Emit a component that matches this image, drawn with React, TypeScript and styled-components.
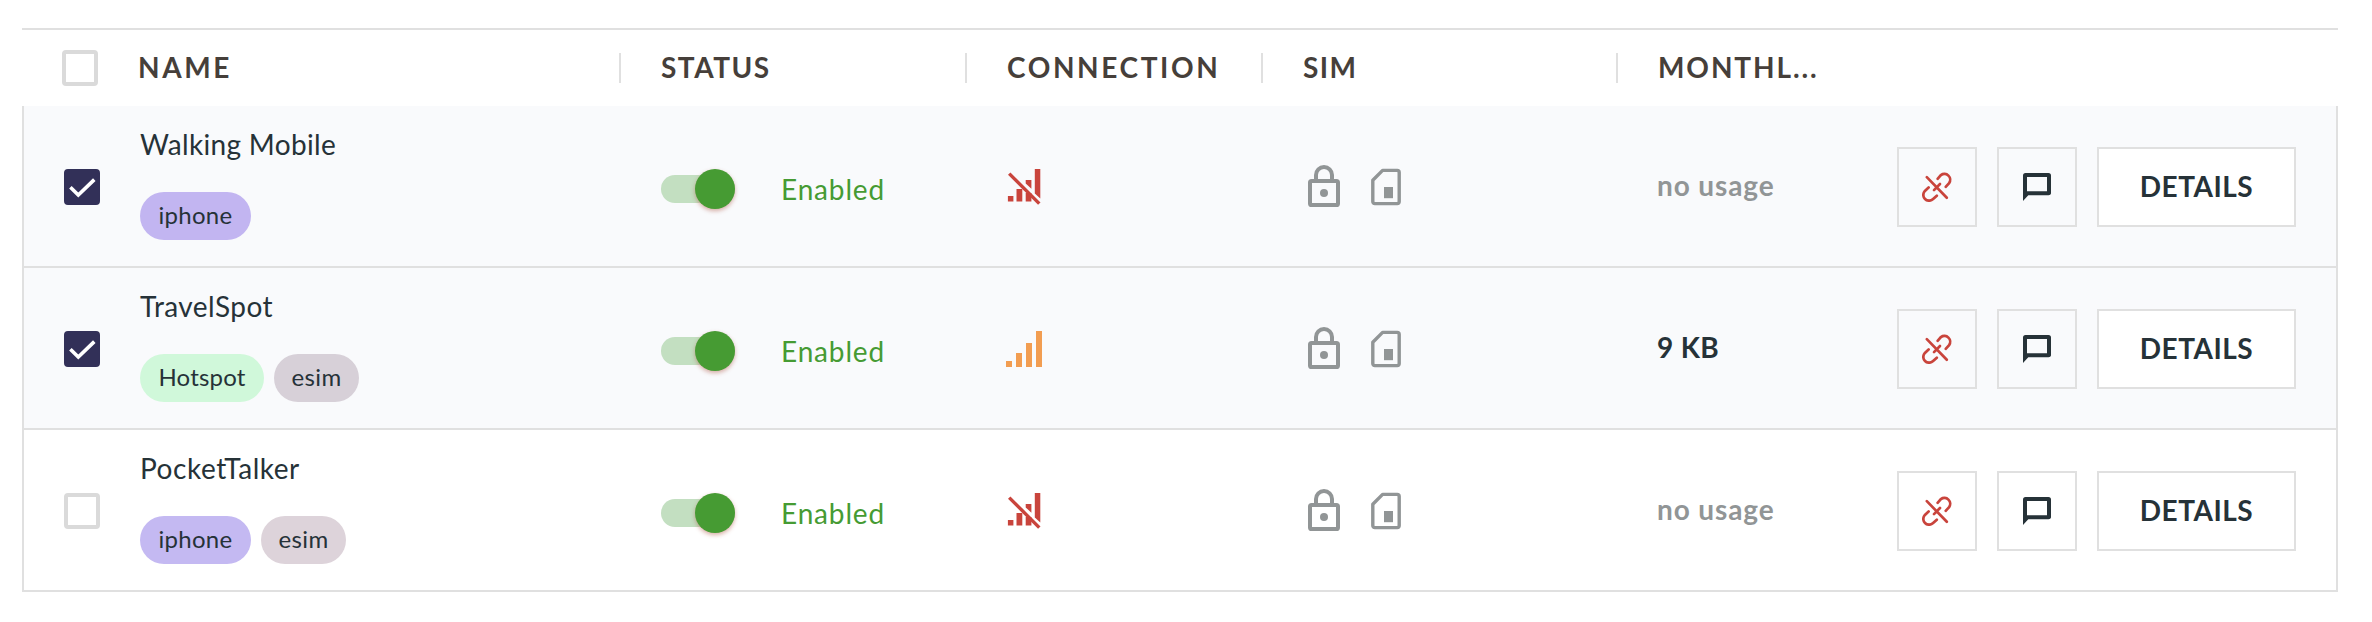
import React from 'react';
import styled, { createGlobalStyle } from 'styled-components';

const GlobalStyle = createGlobalStyle`
  * { box-sizing: border-box; }
  body { margin: 0; background: #fff; }
  button { font: inherit; margin: 0; padding: 0; }
`;

const line = '#e0e0e0';
const ink = '#263238';
const danger = '#c9443c';
const success = '#469b33';

const Page = styled.main`
  padding: 28px 34px 30px 22px;
  font-family: Lato, 'Liberation Sans', sans-serif;
  font-size: 28px;
  line-height: 34px;
  color: ${ink};
`;

const HeaderRow = styled.header`
  display: grid;
  grid-template-columns: 116px 481px 346px 296px 355px 1fr;
  align-items: center;
  height: 78px;
  border-top: 2px solid ${line};
`;

const HeaderCheck = styled.div`
  padding-left: 40px;
`;

const HeaderCell = styled.div<{ $tracking: number; $divider?: boolean }>`
  height: 30px;
  display: flex;
  align-items: center;
  padding-bottom: 3px;
  padding-left: ${({ $divider }) => ($divider ? 40 : 0)}px;
  border-left: ${({ $divider }) => ($divider ? `2px solid ${line}` : 'none')};
  font-weight: 700;
  letter-spacing: ${({ $tracking }) => $tracking}px;
  color: #463f3a;
  white-space: nowrap;
`;

const Body = styled.section`
  border: 2px solid ${line};
  border-top: 0;
`;

const Row = styled.div<{ $selected: boolean }>`
  display: grid;
  grid-template-columns: 116px 521px 346px 301px 349px 200px 1fr;
  box-sizing: content-box;
  height: 160px;
  background: ${({ $selected }) => ($selected ? '#f9fafc' : '#fff')};
  border-bottom: 2px solid ${line};
  &:last-child { border-bottom: 0; }
`;

const CheckCell = styled.div`
  padding: 63px 0 0 40px;
`;

const Box = styled.div<{ $checked?: boolean }>`
  width: 36px;
  height: 36px;
  border: 4px solid ${({ $checked }) => ($checked ? '#323058' : '#dadada')};
  border-radius: 4px;
  background: ${({ $checked }) => ($checked ? '#323058' : '#fff')};
  svg { display: block; }
`;

const NameCell = styled.div`
  padding-top: 21px;
`;

const DeviceName = styled.div<{ $tracking: number }>`
  letter-spacing: ${({ $tracking }) => $tracking}px;
`;

const Tags = styled.div`
  display: flex;
  gap: 10px;
  margin-top: 31px;
`;

const TagPill = styled.span<{ $fill: string; $width: number; $tracking: number }>`
  display: flex;
  justify-content: center;
  align-items: center;
  width: ${({ $width }) => $width}px;
  height: 48px;
  padding-bottom: 2px;
  border-radius: 24px;
  background: ${({ $fill }) => $fill};
  font-size: 24px;
  line-height: 30px;
  letter-spacing: ${({ $tracking }) => $tracking}px;
`;

const StatusCell = styled.div`
  display: flex;
  align-items: center;
  padding-top: 6px;
`;

const Track = styled.div`
  display: flex;
  justify-content: flex-end;
  align-items: center;
  width: 74px;
  height: 28px;
  border-radius: 14px;
  background: #c3dfc1;
`;

const Thumb = styled.div`
  width: 40px;
  height: 40px;
  border-radius: 50%;
  background: ${success};
  box-shadow: 0 2px 4px rgba(170, 80, 60, 0.45);
`;

const StatusText = styled.span`
  margin-left: 46px;
  letter-spacing: 0.85px;
  color: ${success};
`;

const ConnectionCell = styled.div`
  svg { display: block; margin: 62px 0 0 -1px; }
`;

const SimCell = styled.div`
  display: flex;
  align-items: flex-start;
  gap: 29px;
  color: #919596;
  svg { display: block; margin-top: 59px; }
`;

const UsageCell = styled.div<{ $active: boolean; $tracking: number }>`
  display: flex;
  align-items: center;
  padding-bottom: 2px;
  font-weight: 700;
  letter-spacing: ${({ $tracking }) => $tracking}px;
  color: ${({ $active }) => ($active ? ink : '#919596')};
`;

const Actions = styled.div`
  display: flex;
  justify-content: flex-end;
  gap: 20px;
  padding: 41px 40px 0 0;
`;

const IconButton = styled.button<{ $tone: string }>`
  display: flex;
  align-items: center;
  justify-content: center;
  width: 80px;
  height: 80px;
  border: 2px solid ${line};
  background: transparent;
  color: ${({ $tone }) => $tone};
`;

const DetailsButton = styled.button`
  width: 199px;
  height: 80px;
  padding-bottom: 3px;
  border: 2px solid ${line};
  background: #fff;
  color: ${ink};
  font-weight: 700;
  letter-spacing: 0.5px;
`;

const CheckMark = () => (
  <svg width="28" height="28" viewBox="0 0 28 28" fill="none">
    <path d="M2.4 14.2 L10.3 22 L26.3 6.6" stroke="#fff" strokeWidth="3.6" />
  </svg>
);

const NoSignal = () => (
  <svg width="38" height="38" viewBox="0 0 38 38" fill={danger}>
    <path d="M1.9 28.1h5.5v5.4H1.9zM10.5 21h5.8v12.5h-5.8zM19.7 25h5.7v8.5h-5.7z" />
    <path d="M19.7 12h5.7v8.8l-5.7-5.4zM28.8 1h5.5v29.6l-5.5-5.2z" />
    <path d="M3.2 5.6 L33.3 35.6" stroke={danger} strokeWidth="3.4" />
  </svg>
);

const Signal = () => (
  <svg width="38" height="38" viewBox="0 0 38 38" fill="#f29d51">
    <path d="M0 31h6v6H0zM10 23h6v14h-6zM20 13h6v24h-6zM30 1h6v36h-6z" />
  </svg>
);

const Lock = () => (
  <svg width="34" height="42" viewBox="1 0 34 42" fill="none" stroke="currentColor" strokeWidth="4">
    <rect x="3" y="16" width="28" height="24" rx="1.6" />
    <path d="M9 15V10a8 8 0 0 1 16 0v5" />
    <circle cx="17" cy="28" r="4" fill="currentColor" stroke="none" />
  </svg>
);

const SimCard = () => (
  <svg width="30" height="42" viewBox="0 0 30 42" fill="none" stroke="currentColor" strokeWidth="3.4">
    <path d="M11.6 5.4H26.2a2 2 0 0 1 2 2V36.6a2 2 0 0 1-2 2H3.8a2 2 0 0 1-2-2V15.2z" strokeLinejoin="round" />
    <path d="M13 22h9v11.2h-9z" fill="currentColor" stroke="none" />
  </svg>
);

const Unlink = () => (
  <svg width="30" height="30" viewBox="0 0 30 30" fill="none" stroke="currentColor" strokeWidth="2.7" strokeLinecap="round">
    <path d="M15.6 6.8 L18.9 3.1 A5.8 5.8 0 0 1 27.1 11.1 L23.7 14.8" />
    <path d="M6.6 15.4 L2.9 18.9 A5.8 5.8 0 0 0 11.1 27.1 L14.8 23.7" />
    <path d="M4.8 5.1 L24.8 25.8 M12 18.1 L18 12" />
  </svg>
);

const Message = () => (
  <svg width="28" height="28" viewBox="0 0 28 28" fill="currentColor">
    <path fillRule="evenodd" d="M2.5 0h23A2.5 2.5 0 0 1 28 2.5v17A2.5 2.5 0 0 1 25.5 22.3H5.3L0 28V2.5A2.5 2.5 0 0 1 2.5 0zM4 4v14.2h20V4z" />
  </svg>
);

type Tag = { label: string; fill: string; width: number; tracking: number };
type Device = {
  name: string;
  tracking: number;
  selected: boolean;
  online: boolean;
  usage?: string;
  tags: Tag[];
};

const iphone = (fill: string): Tag => ({ label: 'iphone', fill, width: 111, tracking: 0.3 });
const esim = (fill: string): Tag => ({ label: 'esim', fill, width: 85, tracking: 0.4 });

const devices: Device[] = [
  { name: 'Walking Mobile', tracking: 0.33, selected: true, online: false, tags: [iphone('#c2b5f1')] },
  {
    name: 'TravelSpot',
    tracking: 0.44,
    selected: true,
    online: true,
    usage: '9 KB',
    tags: [{ label: 'Hotspot', fill: '#d0f8da', width: 124, tracking: 0.2 }, esim('#d7d0d8')],
  },
  { name: 'PocketTalker', tracking: 0.55, selected: false, online: false, tags: [iphone('#c4b9f2'), esim('#ddd3da')] },
];

const DeviceRow = ({ device }: { device: Device }) => (
  <Row $selected={device.selected}>
    <CheckCell>
      <Box $checked={device.selected}>{device.selected && <CheckMark />}</Box>
    </CheckCell>
    <NameCell>
      <DeviceName $tracking={device.tracking}>{device.name}</DeviceName>
      <Tags>
        {device.tags.map((t) => (
          <TagPill key={t.label} $fill={t.fill} $width={t.width} $tracking={t.tracking}>{t.label}</TagPill>
        ))}
      </Tags>
    </NameCell>
    <StatusCell>
      <Track><Thumb /></Track>
      <StatusText>Enabled</StatusText>
    </StatusCell>
    <ConnectionCell>{device.online ? <Signal /> : <NoSignal />}</ConnectionCell>
    <SimCell>
      <Lock />
      <SimCard />
    </SimCell>
    <UsageCell $active={Boolean(device.usage)} $tracking={device.usage ? 0.3 : 0.88}>
      {device.usage ?? 'no usage'}
    </UsageCell>
    <Actions>
      <IconButton $tone={danger} aria-label="Disconnect"><Unlink /></IconButton>
      <IconButton $tone={ink} aria-label="Message"><Message /></IconButton>
      <DetailsButton>DETAILS</DetailsButton>
    </Actions>
  </Row>
);

export default function App() {
  return (
    <Page>
      <GlobalStyle />
      <HeaderRow>
        <HeaderCheck><Box /></HeaderCheck>
        <HeaderCell $tracking={2.6}>NAME</HeaderCell>
        <HeaderCell $divider $tracking={1.5}>STATUS</HeaderCell>
        <HeaderCell $divider $tracking={2.6}>CONNECTION</HeaderCell>
        <HeaderCell $divider $tracking={1.4}>SIM</HeaderCell>
        <HeaderCell $divider $tracking={1.9}>MONTHL...</HeaderCell>
      </HeaderRow>
      <Body>
        {devices.map((d) => <DeviceRow key={d.name} device={d} />)}
      </Body>
    </Page>
  );
}
